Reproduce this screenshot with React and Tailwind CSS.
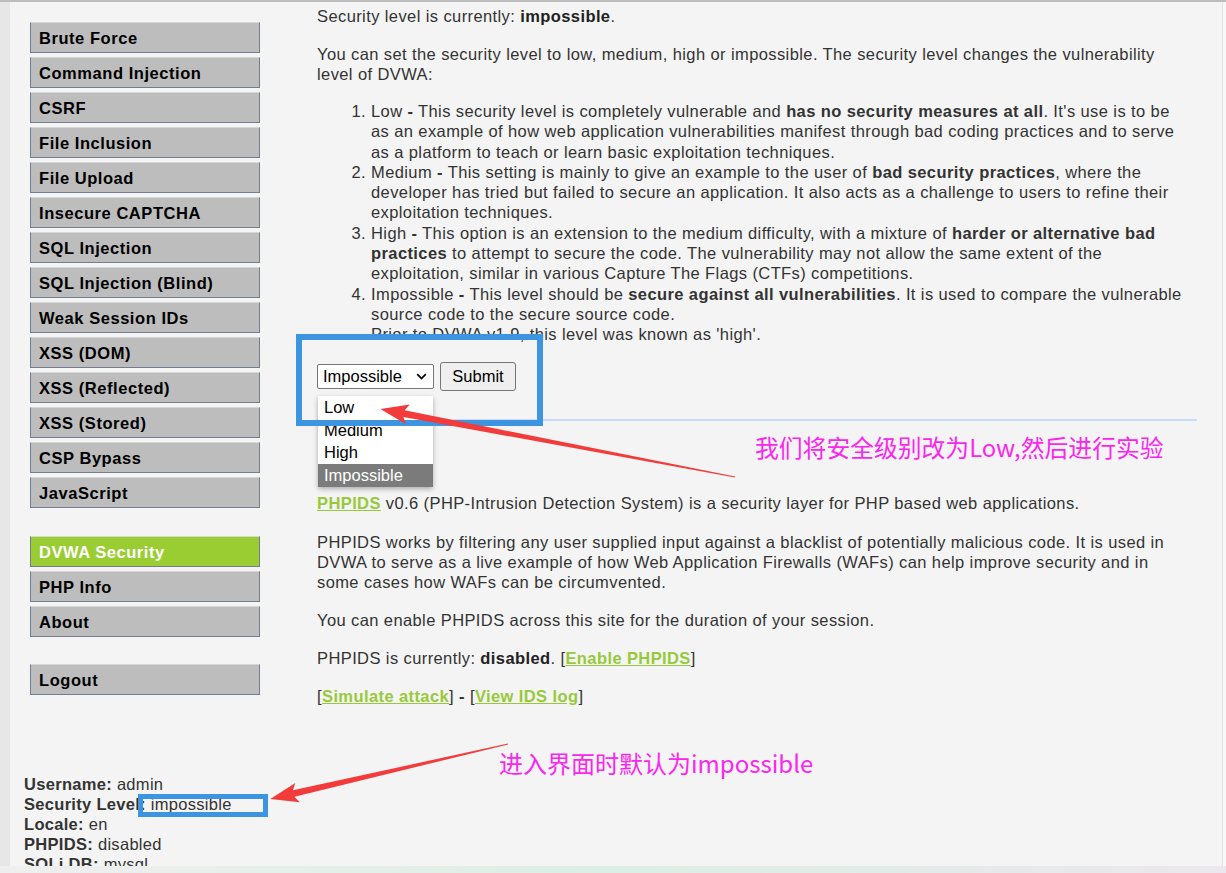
import React from "react";

const menuMain = [
  "Brute Force",
  "Command Injection",
  "CSRF",
  "File Inclusion",
  "File Upload",
  "Insecure CAPTCHA",
  "SQL Injection",
  "SQL Injection (Blind)",
  "Weak Session IDs",
  "XSS (DOM)",
  "XSS (Reflected)",
  "XSS (Stored)",
  "CSP Bypass",
  "JavaScript",
];

const menuInfo = ["DVWA Security", "PHP Info", "About"];

function MenuItem({ label, active }) {
  return (
    <li
      className={`flex h-[31px] items-center border border-[#737d8f] border-t-[#d6d6d6] pl-[8px] font-bold tracking-[0.55px] ${
        active ? "bg-[#9acd32] text-white" : "bg-[#bdbdbd] text-black"
      }`}
    >
      {label}
    </li>
  );
}

function Arrow({ x, y, len, angle }) {
  const L = len;
  const pts = `0,-0.4 ${L - 24},-3.4 ${L - 28},-10 ${L},0 ${L - 28},10 ${L - 24},3.4 0,0.4`;
  return (
    <g transform={`translate(${x} ${y}) rotate(${angle})`}>
      <polygon points={pts} fill="#f43b3b" />
    </g>
  );
}

function GreenLink({ children }) {
  return <a className="font-bold text-[#98c93c] underline">{children}</a>;
}

export default function App() {
  return (
    <div className="relative h-[873px] w-[1226px] overflow-hidden border-t-2 border-[#bdbdbd] bg-[#f4f4f4] font-['Liberation_Sans',Arial,sans-serif] text-[16.5px] text-[#333]">
      <div className="flex h-full">
        <div className="w-[10px] shrink-0 bg-[#e7e7e7]" />

        <div className="flex w-[1212px] flex-col">
          <div className="flex">
            {/* menu */}
            <div className="w-[307px] shrink-0 pl-[20px] pt-[20px]">
              <ul className="flex w-[230px] flex-col gap-[4px] leading-[20px]">
                {menuMain.map((m) => (
                  <MenuItem key={m} label={m} />
                ))}
              </ul>
              <ul className="mt-[28px] flex w-[230px] flex-col gap-[4px] leading-[20px]">
                {menuInfo.map((m) => (
                  <MenuItem key={m} label={m} active={m === "DVWA Security"} />
                ))}
              </ul>
              <ul className="mt-[27px] flex w-[230px] flex-col leading-[20px]">
                <MenuItem label="Logout" />
              </ul>
            </div>

            {/* body */}
            <div className="w-[880px] pt-[4px] leading-[20px] tracking-[0.4px]">
              <div className="pr-[7px]">
                <p>
                  Security level is currently: <b className="text-[#222]">impossible</b>.
                </p>
                <p className="mt-[18px]">
                  You can set the security level to low, medium, high or impossible. The security level changes the vulnerability level of DVWA:
                </p>
                <ol className="mt-[17px] list-decimal pl-[54px] leading-[20.3px]">
                  <li>
                    Low <b>-</b> This security level is completely vulnerable and <b>has no security measures at all</b>. It's use is to be as an example of how web application vulnerabilities manifest through bad coding practices and to serve as a platform to teach or learn basic exploitation techniques.
                  </li>
                  <li>
                    Medium <b>-</b> This setting is mainly to give an example to the user of <b>bad security practices</b>, where the developer has tried but failed to secure an application. It also acts as a challenge to users to refine their exploitation techniques.
                  </li>
                  <li>
                    High <b>-</b> This option is an extension to the medium difficulty, with a mixture of <b>harder or alternative bad practices</b> to attempt to secure the code. The vulnerability may not allow the same extent of the exploitation, similar in various Capture The Flags (CTFs) competitions.
                  </li>
                  <li>
                    Impossible <b>-</b> This level should be <b>secure against all vulnerabilities</b>. It is used to compare the vulnerable source code to the secure source code.
                    <br />
                    Prior to DVWA v1.9, this level was known as 'high'.
                  </li>
                </ol>

                <div className="mt-[17px] flex items-center gap-[6px] tracking-normal text-black">
                  <div className="flex h-[25px] w-[117px] items-center justify-between rounded-[2px] border border-[#767676] bg-white pl-[5px] pr-[6px]">
                    <span>Impossible</span>
                    <svg width="11" height="7" viewBox="0 0 11 7">
                      <path d="M1.2 1.2 L5.5 5.5 L9.8 1.2" fill="none" stroke="#000" strokeWidth="1.7" />
                    </svg>
                  </div>
                  <div className="flex h-[29px] w-[76px] items-center justify-center rounded-[3px] border border-[#767676] bg-[#efefef]">
                    Submit
                  </div>
                </div>
              </div>

              <div className="mt-[28px] h-[2px] w-full bg-[#c9dbf7]" />

              <div className="pr-[7px]">
                <p className="mt-[72px]">
                  <GreenLink>PHPIDS</GreenLink> v0.6 (PHP-Intrusion Detection System) is a security layer for PHP based web applications.
                </p>
                <p className="mt-[19px]">
                  PHPIDS works by filtering any user supplied input against a blacklist of potentially malicious code. It is used in DVWA to serve as a live example of how Web Application Firewalls (WAFs) can help improve security and in some cases how WAFs can be circumvented.
                </p>
                <p className="mt-[18px]">You can enable PHPIDS across this site for the duration of your session.</p>
                <p className="mt-[18px]">
                  PHPIDS is currently: <b className="text-[#222]">disabled</b>. [<GreenLink>Enable PHPIDS</GreenLink>]
                </p>
                <p className="mt-[18px]">
                  [<GreenLink>Simulate attack</GreenLink>] <b>-</b> [<GreenLink>View IDS log</GreenLink>]
                </p>
              </div>
            </div>
          </div>

          {/* footer info */}
          <div className="mt-[68px] pl-[14px] leading-[20px] tracking-[0.3px]">
            <div><b>Username:</b> admin</div>
            <div><b>Security Level:</b> impossible</div>
            <div><b>Locale:</b> en</div>
            <div><b>PHPIDS:</b> disabled</div>
            <div><b>SQLi DB:</b> mysql</div>
          </div>
        </div>

        <div className="w-[4px] shrink-0 border-l border-[#e2e2e2] bg-[#f8f8f8]" />
      </div>

      {/* open select list */}
      <ul className="absolute left-[318px] top-[394px] w-[115px] bg-white leading-[22.7px] text-black shadow-[0_2px_5px_rgba(0,0,0,0.3)]">
        <li className="pl-[6px]">Low</li>
        <li className="pl-[6px]">Medium</li>
        <li className="pl-[6px]">High</li>
        <li className="bg-[#7b7b7b] pl-[6px] text-white">Impossible</li>
      </ul>

      {/* annotations */}
      <div className="absolute left-[296px] top-[332px] h-[92px] w-[247px] border-[6px] border-[#3d95e2]" />
      <div className="absolute left-[138px] top-[792px] h-[23px] w-[130px] border-[5px] border-[#3d95e2]" />

      <svg className="absolute left-0 top-0" width="1226" height="873" viewBox="0 0 1226 873">
        <Arrow x={735} y={475} len={361} angle={190.84} />
        <Arrow x={508} y={742} len={244} angle={166.99} />
      </svg>

      <div className="absolute left-[755px] top-[430px] whitespace-nowrap font-['Noto_Sans_CJK_SC',sans-serif] text-[23.8px] leading-[30px] text-[#fa26ef]">
        我们将安全级别改为Low,然后进行实验
      </div>
      <div className="absolute left-[499px] top-[746px] whitespace-nowrap font-['Noto_Sans_CJK_SC',sans-serif] text-[24px] leading-[30px] text-[#fa26ef]">
        进入界面时默认为impossible
      </div>

      <div className="absolute bottom-0 left-0 h-[7px] w-full bg-gradient-to-r from-[#efefef] via-[#dcefe4] to-[#ece7ee]" />
    </div>
  );
}
